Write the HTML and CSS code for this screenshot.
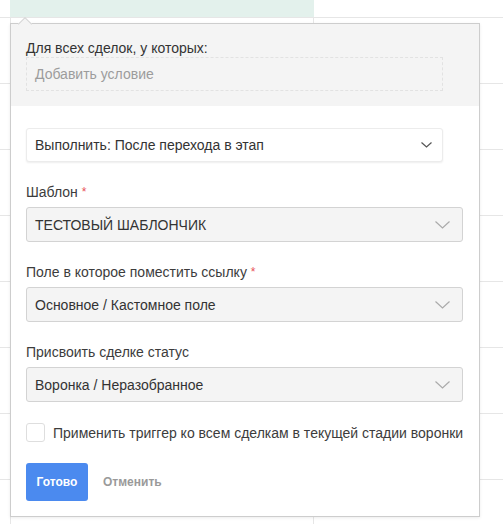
FILE: index.html
```html
<!DOCTYPE html>
<html lang="ru">
<head>
  <meta charset="UTF-8" />
  <meta name="viewport" content="width=device-width, initial-scale=1.0"/>
  <title>Триггер: ссылка на шаблон</title>
  <link rel="stylesheet" href="styles.css">
</head>
<body>
  <div class="board">
    <div class="row row--top">
      <div class="cell"></div>
      <div class="cell cell--stage"></div>
      <div class="cell"></div>
    </div>
    <div class="row"><div class="cell"></div><div class="cell cell--mid"></div><div class="cell"></div></div>
    <div class="row"><div class="cell"></div><div class="cell cell--mid"></div><div class="cell"></div></div>
    <div class="row"><div class="cell"></div><div class="cell cell--mid"></div><div class="cell"></div></div>
    <div class="row"><div class="cell"></div><div class="cell cell--mid"></div><div class="cell"></div></div>
    <div class="row"><div class="cell"></div><div class="cell cell--mid"></div><div class="cell"></div></div>
    <div class="row"><div class="cell"></div><div class="cell cell--mid"></div><div class="cell"></div></div>
    <div class="row"><div class="cell"></div><div class="cell cell--mid"></div><div class="cell"></div></div>
    <div class="row"><div class="cell"></div><div class="cell cell--mid"></div><div class="cell"></div></div>
  </div>

  <div class="popup">
    <div class="popup__head">
      <div class="popup__title">Для всех сделок, у которых:</div>
      <div class="condition">Добавить условие</div>
    </div>

    <div class="popup__body">
      <div class="select select--plain">
        <span>Выполнить: После перехода в этап</span>
        <svg class="chevron" width="11" height="6" viewBox="0 0 11 6"><path d="M0.5 0.5 L5.5 5 L10.5 0.5" fill="none" stroke="#555" stroke-width="1.2"/></svg>
      </div>

      <div class="field">
        <div class="field__label">Шаблон <span class="req">*</span></div>
        <div class="select">
          <span>ТЕСТОВЫЙ ШАБЛОНЧИК</span>
          <svg class="chevron" width="15" height="8" viewBox="0 0 15 8"><path d="M0.5 0.5 L7.5 7 L14.5 0.5" fill="none" stroke="#aaa" stroke-width="1.2"/></svg>
        </div>
      </div>

      <div class="field">
        <div class="field__label">Поле в которое поместить ссылку <span class="req">*</span></div>
        <div class="select">
          <span>Основное / Кастомное поле</span>
          <svg class="chevron" width="15" height="8" viewBox="0 0 15 8"><path d="M0.5 0.5 L7.5 7 L14.5 0.5" fill="none" stroke="#aaa" stroke-width="1.2"/></svg>
        </div>
      </div>

      <div class="field">
        <div class="field__label">Присвоить сделке статус</div>
        <div class="select">
          <span>Воронка / Неразобранное</span>
          <svg class="chevron" width="15" height="8" viewBox="0 0 15 8"><path d="M0.5 0.5 L7.5 7 L14.5 0.5" fill="none" stroke="#aaa" stroke-width="1.2"/></svg>
        </div>
      </div>

      <label class="check">
        <span class="check__box"></span>
        <span>Применить триггер ко всем сделкам в текущей стадии воронки</span>
      </label>

      <div class="actions">
        <button class="btn btn--primary">Готово</button>
        <button class="btn btn--link">Отменить</button>
      </div>
    </div>
  </div>
</body>
</html>
```

FILE: styles.css
```css
* {
  margin: 0;
  padding: 0;
  box-sizing: border-box;
}

body {
  font-family: "Liberation Sans", Arial, sans-serif;
  font-size: 14px;
  color: #3c3c3c;
  background: #fff;
  position: relative;
  overflow: hidden;
  height: 524px;
}

/* pipeline grid behind the popup */
.board {
  display: flex;
  flex-direction: column;
}

.row {
  display: grid;
  grid-template-columns: 10px 304px 1fr;
  height: 66px;
  border-bottom: 1px solid #e6e6e6;
}

.row--top {
  height: 18px;
}

.cell--stage {
  background: #e3f1ec;
}

.cell--mid {
  border-left: 1px solid #e6e6e6;
  border-right: 1px solid #e6e6e6;
}

/* popup */
.popup {
  position: absolute;
  left: 10px;
  top: 23px;
  width: 470px;
  height: 494px;
  background: #fff;
  border: 1px solid #cdcdcd;
  box-shadow: 0 1px 3px rgba(0, 0, 0, 0.08);
}

.popup::before {
  content: "";
  position: absolute;
  left: 9px;
  top: -5px;
  width: 9px;
  height: 9px;
  transform: rotate(45deg);
  background: #f4f4f4;
  border-left: 1px solid #d6d6d6;
  border-top: 1px solid #d6d6d6;
  z-index: 1;
}

.popup__head {
  background: #f4f4f4;
  padding: 15px 36px 15px 15px;
}

.popup__title {
  line-height: 18px;
  color: #333;
}

.condition {
  height: 34px;
  line-height: 32px;
  padding-left: 8px;
  border: 1px dashed #e2e2e2;
  color: #9c9c9c;
}

.popup__body {
  padding: 22px 15px 13px;
}

.select {
  display: flex;
  align-items: center;
  justify-content: space-between;
  width: 437px;
  height: 35px;
  padding: 0 12px 0 8px;
  background: #f4f4f4;
  border: 1px solid #d3d3d3;
  border-radius: 3px;
  color: #333;
}

.select--plain {
  width: 417px;
  height: 34px;
  margin-bottom: 1px;
  padding-right: 10px;
  background: #fff;
  border-color: #ececec;
  box-shadow: 0 1px 2px rgba(0, 0, 0, 0.07);
}

.field {
  margin-top: 21px;
}

.field__label {
  line-height: 18px;
  margin-bottom: 6px;
  color: #3c3c3c;
}

.req {
  color: #e8525a;
  font-size: 12px;
  vertical-align: top;
}

.check {
  display: flex;
  align-items: center;
  gap: 8px;
  height: 19px;
  margin-top: 21px;
  color: #3c3c3c;
}

.check__box {
  width: 19px;
  height: 19px;
  border: 1px solid #dedede;
  border-radius: 3px;
  background: #fff;
}

.actions {
  display: flex;
  align-items: center;
  margin-top: 21px;
}

.btn {
  font-family: inherit;
  font-size: 12px;
  font-weight: bold;
  border: 0;
  background: none;
  cursor: pointer;
}

.btn--primary {
  width: 62px;
  height: 38px;
  border-radius: 3px;
  background: #4b8aef;
  color: #fff;
}

.btn--link {
  margin-left: 15px;
  color: #9a9a9a;
}
```
